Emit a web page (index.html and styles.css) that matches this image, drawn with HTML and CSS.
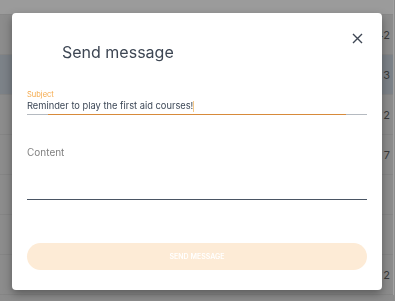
FILE: index.html
```html
<!DOCTYPE html>
<html lang="en">
<head>
  <meta charset="UTF-8">
  <title>Send message</title>
  <link rel="stylesheet" href="styles.css">
</head>
<body>
  <div class="table">
    <div class="table-head"></div>
    <div class="row"><span>42</span></div>
    <div class="row selected"><span>3</span></div>
    <div class="row"><span>2</span></div>
    <div class="row"><span>7</span></div>
    <div class="row"><span></span></div>
    <div class="row"><span></span></div>
    <div class="row"><span>2</span></div>
  </div>

  <div class="dialog">
    <div class="dialog-header">
      <h2>Send message</h2>
      <button class="close" aria-label="Close">
        <svg width="11" height="11" viewBox="0 0 11 11">
          <path d="M1 1 L10 10 M10 1 L1 10" stroke="#3f4754" stroke-width="1.4" fill="none"/>
        </svg>
      </button>
    </div>

    <div class="field focused">
      <label>Subject</label>
      <div class="value">Reminder to play the first aid courses!<span class="caret"></span></div>
      <div class="line"><div class="line-active"></div></div>
    </div>

    <div class="field content">
      <label>Content</label>
      <div class="line dark"></div>
    </div>

    <button class="send">SEND MESSAGE</button>
  </div>
</body>
</html>
```

FILE: styles.css
```css
body {
  margin: 0;
  font-family: "Inter", "Noto Sans", sans-serif;
  background: #8c8c8c;
  width: 395px;
  height: 301px;
  overflow: hidden;
}

.table {
  display: flex;
  flex-direction: column;
  border-right: 1px solid #a3a3a3;
  width: 393px;
}

.table-head {
  height: 14px;
  background: #9b9b9b;
  border-bottom: 1px solid #888;
}

.row {
  height: 39px;
  border-bottom: 1px solid #858585;
  display: flex;
  align-items: center;
  justify-content: flex-end;
  padding-right: 3px;
  font-size: 11px;
  color: #3a3a3a;
}

.row.selected {
  background: #7c8288;
}

.dialog {
  position: fixed;
  left: 12px;
  top: 13px;
  width: 340px;
  height: 277px;
  padding: 0 15px;
  background: #fff;
  border-radius: 4px;
  box-shadow: 0 4px 10px rgba(0, 0, 0, 0.35);
  display: flex;
  flex-direction: column;
}

.dialog-header {
  display: flex;
  justify-content: space-between;
  align-items: flex-start;
  padding-top: 18px;
}

.dialog-header h2 {
  margin: 11px 0 0 35px;
  font-size: 16px;
  font-weight: 400;
  color: #3d4653;
}

.close {
  border: none;
  background: none;
  padding: 0;
  margin: 1px 4px 0 0;
  width: 11px;
  height: 11px;
}

.field {
  display: flex;
  flex-direction: column;
}

.field.focused {
  margin-top: 28px;
}

.field label {
  font-size: 7.5px;
  color: #f5a94a;
  line-height: 10px;
}

.field .value {
  font-size: 9.3px;
  color: #3c4756;
  line-height: 12px;
  display: flex;
  align-items: center;
}

.caret {
  display: inline-block;
  width: 1px;
  height: 11px;
  background: #f5c98a;
}

.line {
  height: 1px;
  background: #b5bac0;
  margin-top: 2px;
  display: flex;
  justify-content: center;
}

.line-active {
  width: 298px;
  height: 1px;
  background: #d78a3a;
}

.field.content {
  margin-top: 31px;
}

.field.content label {
  font-size: 10px;
  color: #808080;
  line-height: 13px;
}

.line.dark {
  background: #4a5564;
  margin-top: 40px;
}

.send {
  margin-top: 43px;
  height: 27px;
  border: none;
  border-radius: 14px;
  background: #fdebd6;
  color: #fff;
  font-family: "Inter", "Noto Sans", sans-serif;
  font-size: 7px;
  font-weight: 600;
}
```
